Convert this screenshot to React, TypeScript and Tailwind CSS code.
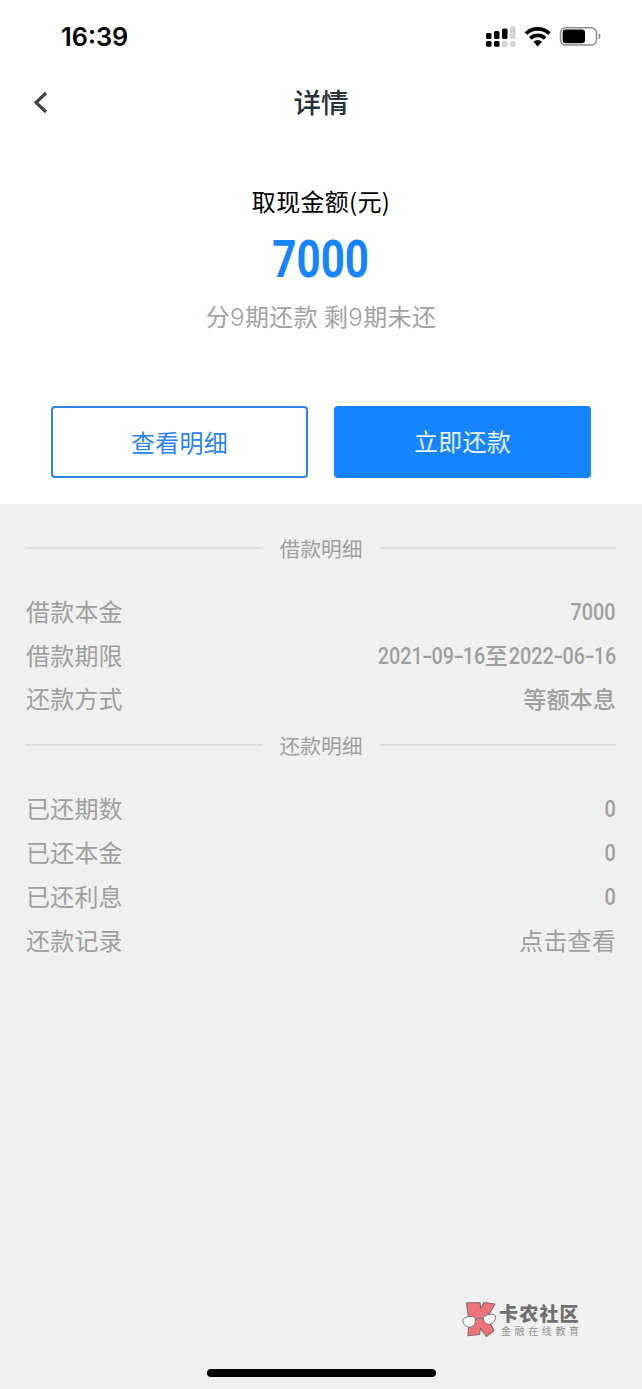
import React, { ReactNode } from "react";

interface NumProps {
  children: string;
}

interface RowProps {
  label: string;
  children: ReactNode;
}

const Num: React.FC<NumProps> = ({ children }) => (
  <span className="inline-block origin-right scale-x-[0.825] pt-[2px] font-['Roboto'] text-[24px] font-medium">
    {children.split("-").map((part, i) => (
      <React.Fragment key={i}>
        {i > 0 && <span className="mx-[1.2px] inline-block scale-x-150">-</span>}
        {part}
      </React.Fragment>
    ))}
  </span>
);

const Row: React.FC<RowProps> = ({ label, children }) => (
  <div className="flex h-[43.8px] items-center justify-between">
    <span className="tracking-[0.2px]">{label}</span>
    <span className="flex items-center">{children}</span>
  </div>
);

const Divider: React.FC<{ title: string }> = ({ title }) => (
  <div className="flex h-[30px] items-center">
    <div className="h-[2px] flex-1 bg-[#dcdcdc]" />
    <span className="w-[118px] text-center text-[20.8px]">{title}</span>
    <div className="h-[2px] flex-1 bg-[#dcdcdc]" />
  </div>
);

const StatusBar = () => (
  <div className="flex h-[72px] items-center justify-between pl-[61px] pr-[40px]">
    <span className="pt-[1px] font-['Inter'] text-[25.3px] font-semibold leading-none text-black">16:39</span>
    <svg width="116" height="24" viewBox="0 0 116 24">
      <g fill="#000">
        <rect x="0" y="9" width="5.5" height="6" rx="1.5" />
        <rect x="8" y="7" width="5.5" height="8" rx="1.5" />
        <rect x="16" y="4.4" width="5.5" height="10.6" rx="1.5" />
        <rect x="0" y="17" width="5.5" height="5.7" rx="1.5" />
        <rect x="8" y="17" width="5.5" height="5.7" rx="1.5" />
      </g>
      <g fill="#d2d2d2">
        <rect x="24" y="2.2" width="5.5" height="12.8" rx="1.5" />
        <rect x="16" y="17" width="5.5" height="5.7" rx="1.5" />
        <rect x="24" y="17" width="5.5" height="5.7" rx="1.5" />
      </g>
      <g fill="none" stroke="#000" strokeWidth="3.8">
        <path d="M40 9.6a17 17 0 0 1 23.4 0" />
        <path d="M44.3 14.4a10.8 10.8 0 0 1 14.8 0" />
      </g>
      <path d="M47.4 17.8a6.200 6.200 0 0 1 8.600 0l-4.300 4.700z" fill="#000" />
      <rect x="74.5" y="3.7" width="36" height="17.4" rx="5.2" fill="none" stroke="#8c8c8c" strokeWidth="1.5" />
      <rect x="76.6" y="5.5" width="22.4" height="13.8" rx="3" fill="#000" />
      <path d="M112.6 9.3v6.200c2.400-1 2.400-5.200 0-6.200" fill="#8c8c8c" />
    </svg>
  </div>
);

const Watermark = () => (
  <div className="absolute left-[461px] top-[1299px] flex items-start">
    <svg width="38" height="40" viewBox="0 0 38 40">
      <path
        d="M5.5 4 19 3.5 19.5 9.500 23 3.500 34 5 26 18.500 33 31.500 25.5 37.5 19.500 29.500 18.5 35.5 7 36.8 8 22z"
        fill="#ee737b"
        stroke="#85696b"
        strokeWidth="1.1"
        strokeLinejoin="round"
      />
      <g fill="#f8f8f8" stroke="#777" strokeWidth="1">
        <path d="M2 20.500c1-2.200 5-3.300 9-3 3 .2 3.800 2.500 3.300 5.400-.6 3.500-3.300 5.500-6.300 5.300-3.500-.2-6.500-3.500-6-7.700z" />
        <path d="M22.300 18.300c1.500-1.800 6-3.300 9.500-3 2.400.2 3.200 2 2.600 4.600-.8 3.400-3.300 5.300-6.300 5.300-3.400 0-6.200-3-5.800-6.900z" />
      </g>
      <path d="M14.500 20.500q3.700-2.400 7.700-1" fill="none" stroke="#777" />
    </svg>
    <div className="flex flex-col pt-[4px]">
      <span className="text-[19px] font-black leading-[20px] tracking-[1.2px] text-[#707070]">卡农社区</span>
      <span className="ml-[2px] mt-[2px] text-[10px] leading-[12px] tracking-[3.6px] text-[#909090]">
        金融在线教育
      </span>
    </div>
  </div>
);

export default function App() {
  return (
    <div className="relative flex h-[1389px] w-[642px] flex-col overflow-hidden bg-[#f0f0f0] font-['Noto_Sans_CJK_SC',sans-serif]">
      <div className="h-[504px] bg-white">
        <StatusBar />
        <div className="grid h-[60px] grid-cols-[1fr_auto_1fr] items-center">
          <svg className="ml-[32px]" width="18" height="24" viewBox="0 0 18 24" fill="none">
            <path d="M14 3 4 12.5 14 22" stroke="#444" strokeWidth="3.2" />
          </svg>
          <h1 className="text-[27.5px] font-medium leading-none text-[#27313c]">详情</h1>
        </div>

        <div className="flex flex-col items-center pt-[52px] text-[24px]">
          <div className="leading-[34px] tracking-[0.3px] text-black">取现金额(元)</div>
          <div className="mt-[13px] scale-x-[0.81] font-['Roboto'] text-[52px] font-bold leading-[58px] text-[#1684fc]">
            7000
          </div>
          <div className="mt-[10px] leading-[34px] tracking-[0.4px] text-[#a2a2a2]">
            分<span className="font-['Inter'] font-light">9</span>期还款 剩
            <span className="font-['Inter'] font-light">9</span>期未还
          </div>
        </div>

        <div className="mt-[71px] grid grid-cols-2 gap-[26px] px-[51px] text-[24px] tracking-[0.2px]">
          <button className="h-[72px] rounded-[4px] border-2 border-[#2f84e0] text-[#2a83ee]">
            查看明细
          </button>
          <button className="h-[72px] rounded-[4px] bg-[#1684ff] pb-[2px] text-[#e9f5ff]">
            立即还款
          </button>
        </div>
      </div>

      <div className="px-[26px] pt-[29px] text-[24px] leading-none text-[#9f9f9f]">
        <Divider title="借款明细" />
        <div className="pt-[26px]">
          <Row label="借款本金">
            <Num>7000</Num>
          </Row>
          <Row label="借款期限">
            <Num>2021-09-16</Num>
            <span className="-mr-[22px] text-[23px] font-medium">至</span>
            <Num>2022-06-16</Num>
          </Row>
          <Row label="还款方式">
            <span className="text-[23.2px] font-medium">等额本息</span>
          </Row>
        </div>
        <div className="pt-[10px]">
          <Divider title="还款明细" />
        </div>
        <div className="pt-[26px]">
          <Row label="已还期数">
            <Num>0</Num>
          </Row>
          <Row label="已还本金">
            <Num>0</Num>
          </Row>
          <Row label="已还利息">
            <Num>0</Num>
          </Row>
          <Row label="还款记录">
            <span className="tracking-[0.2px]">点击查看</span>
          </Row>
        </div>
      </div>

      <Watermark />
      <div className="absolute bottom-[12px] left-[207px] h-[8px] w-[229px] rounded-full bg-black" />
    </div>
  );
}
